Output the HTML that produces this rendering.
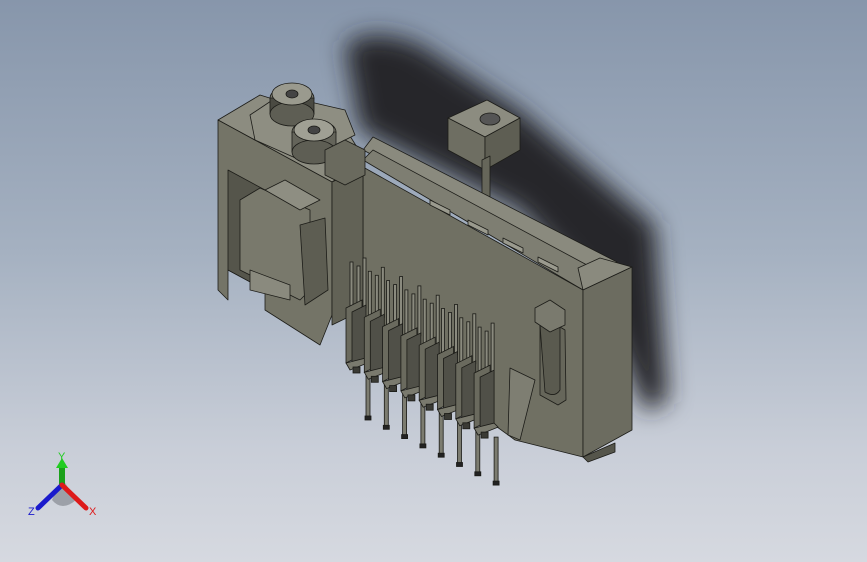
<!DOCTYPE html>
<html><head><meta charset="utf-8"><style>
html,body{margin:0;padding:0;width:867px;height:562px;overflow:hidden}
body{background:linear-gradient(180deg,#8796ab 0%,#a5b1c1 45%,#c9ced8 80%,#d6d9e0 100%);font-family:"Liberation Sans",sans-serif}
svg{position:absolute;left:0;top:0}
</style></head><body>
<svg width="867" height="562" viewBox="0 0 867 562">
<defs>
<filter id="bl" x="-30%" y="-30%" width="160%" height="160%"><feGaussianBlur stdDeviation="12"/></filter>
<g id="mod" stroke="#1a1a16" stroke-width="0.8">
  <rect x="350" y="262" width="3" height="50" fill="#8a8a7e"/>
  <rect x="357" y="266" width="3" height="50" fill="#8a8a7e"/>
  <rect x="363" y="258" width="3" height="50" fill="#8a8a7e"/>
  <polygon points="346,308 362,300 362,355 346,363" fill="#6a6a5e"/>
  <polygon points="352,312 366,305 366,358 352,365" fill="#505048"/>
  <polygon points="346,363 366,358 370,362 350,370" fill="#7a7a6e"/>
  <rect x="353" y="367" width="7" height="6" fill="#3a3a34"/>
  <rect x="366" y="372" width="4" height="46" fill="#7c7c70"/>
  <rect x="365" y="416" width="6" height="4" fill="#222"/>
</g>
</defs>
<!-- shadow -->
<path d="M345 45 Q370 25 420 45 L520 110 L655 225 L668 400 L645 412 L600 300 L520 210 L360 130 Z" fill="#25282c" filter="url(#bl)"/>
<g stroke="#1c1c18" stroke-width="0.8" stroke-linejoin="round">
<!-- post -->
<polygon points="448,118 487,100 520,118 485,137" fill="#8c8c80"/>
<polygon points="448,118 485,137 485,170 448,150" fill="#6e6e62"/>
<polygon points="485,137 520,118 520,150 485,170" fill="#5e5e53"/>
<polygon points="482,160 490,156 490,197 482,193" fill="#66665a"/>
<ellipse cx="490" cy="119" rx="10" ry="6" fill="#555"/>
<!-- top rail back -->
<polygon points="363,150 373,137 617,262 600,272" fill="#8a8a7e"/>
<polygon points="363,160 373,150 600,272 583,290" fill="#7e7e72"/>
<!-- main plate -->
<polygon points="363,167 583,290 583,457 515,440 363,330" fill="#707063"/>
<!-- rail tabs -->
<polygon points="430,200 450,210 450,215 430,205" fill="#9a9a8e"/>
<polygon points="468,220 488,230 488,235 468,225" fill="#9a9a8e"/>
<polygon points="503,238 523,248 523,253 503,243" fill="#9a9a8e"/>
<polygon points="538,257 558,267 558,272 538,262" fill="#9a9a8e"/>
<!-- right block -->
<polygon points="578,268 600,258 632,267 583,290" fill="#8a8a7e"/>
<polygon points="583,290 632,267 632,430 583,457" fill="#6c6c60"/>
<polygon points="583,457 615,443 615,452 588,462" fill="#55554b"/>
<!-- slot on plate -->
<path d="M540 315 L565 330 L566 400 L558 405 L540 395 Z" fill="#66665a"/>
<path d="M540 325 Q545 315 560 325 L560 390 Q555 398 545 392 Z" fill="#5a5a4f"/>
<polygon points="535,308 550,300 565,310 565,325 550,332 535,322" fill="#7a7a6e"/>
<polygon points="510,368 535,380 520,440 508,435" fill="#7e7e72"/>
<!-- left box -->
<polygon points="218,120 260,95 340,120 365,160 332,182" fill="#8c8c80"/>
<polygon points="218,120 332,182 332,315 320,345 265,310 265,290 228,270 228,300 218,290" fill="#747467"/>
<polygon points="228,170 265,190 265,290 228,270" fill="#55554b"/>
<polygon points="332,182 363,167 363,310 332,325" fill="#626256"/>
<!-- inner bracket -->
<polygon points="240,200 260,188 310,210 310,290 300,300 240,270" fill="#79796c"/>
<polygon points="300,225 325,218 328,290 305,305" fill="#5d5d52"/>
<polygon points="265,190 285,180 320,200 300,210" fill="#8e8e82"/>
<polygon points="250,270 290,285 290,300 250,290" fill="#8a8a7e"/>
<!-- pulleys -->
<polygon points="250,115 280,95 345,110 355,135 325,150 300,160 255,140" fill="#8e8e82"/>
<ellipse cx="292" cy="98" rx="22" ry="12" fill="#7a7a6e"/>
<rect x="270" y="98" width="44" height="16" fill="#4a4a42"/>
<ellipse cx="292" cy="114" rx="22" ry="12" fill="#5e5e54"/>
<ellipse cx="292" cy="94" rx="20" ry="11" fill="#9a9a8e"/>
<ellipse cx="292" cy="94" rx="6" ry="4" fill="#444"/>
<ellipse cx="314" cy="132" rx="22" ry="12" fill="#7a7a6e"/>
<rect x="292" y="132" width="44" height="20" fill="#64645a"/>
<ellipse cx="314" cy="152" rx="22" ry="12" fill="#5e5e54"/>
<ellipse cx="314" cy="130" rx="20" ry="11" fill="#a0a094"/>
<ellipse cx="314" cy="130" rx="6" ry="4" fill="#444"/>
<polygon points="325,150 345,140 365,150 365,175 345,185 325,175" fill="#6a6a5e"/>
</g>
<!-- modules -->
<use href="#mod"/>
<use href="#mod" x="18.3" y="9.3"/>
<use href="#mod" x="36.6" y="18.6"/>
<use href="#mod" x="54.9" y="27.9"/>
<use href="#mod" x="73.2" y="37.2"/>
<use href="#mod" x="91.5" y="46.5"/>
<use href="#mod" x="109.8" y="55.8"/>
<use href="#mod" x="128.1" y="65.1"/>
<!-- triad -->
<g>
<path d="M62 478 L52 500 Q62 512 76 500 Z" fill="#6a6e74" opacity="0.5"/>
<rect x="59" y="466" width="6" height="20" fill="#1aa01a"/>
<polygon points="56,468 62,458 68,468" fill="#22cc22"/>
<line x1="62" y1="485" x2="38" y2="508" stroke="#1a1acc" stroke-width="5" stroke-linecap="round"/>
<line x1="62" y1="485" x2="86" y2="508" stroke="#dd1a1a" stroke-width="5" stroke-linecap="round"/>
<text x="58" y="460" fill="#22cc22" font-size="11">Y</text>
<text x="28" y="515" fill="#1a1acc" font-size="11">Z</text>
<text x="89" y="515" fill="#dd1a1a" font-size="11">X</text>
</g>
</svg>
</body></html>
